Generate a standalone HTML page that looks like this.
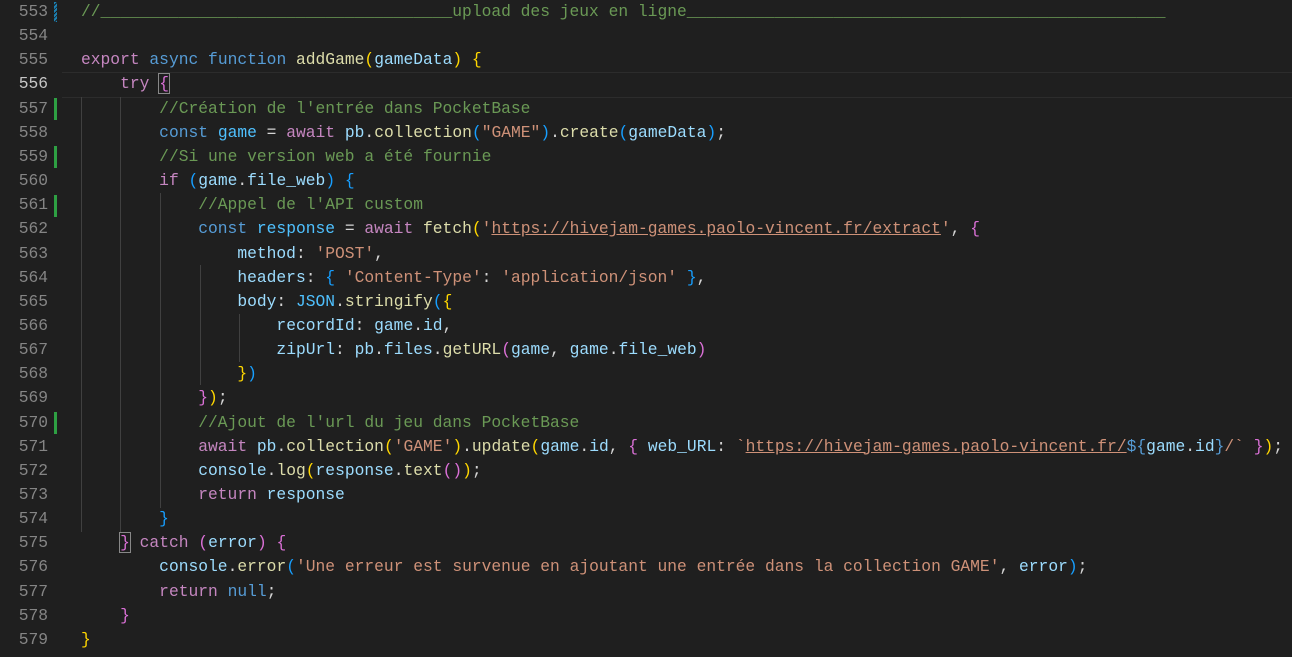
<!DOCTYPE html>
<html><head><meta charset="utf-8"><style>
html,body{margin:0;padding:0;background:#1f1f1f;width:1292px;height:657px;overflow:hidden}
.ed{position:relative;width:1292px;height:657px;font-family:"Liberation Mono",monospace;font-size:16.3px;color:#d4d4d4}
.l{position:absolute;left:0;height:24.15px;line-height:24.15px;white-space:pre;width:1292px}
.n{position:absolute;left:0;width:48px;text-align:right;color:#858585}
.c{position:absolute;left:81px}
.g{position:absolute;width:1px;background:#404040}
.k{color:#c586c0}.s{color:#569cd6}.f{color:#dcdcaa}.v{color:#9cdcfe}.o{color:#4fc1ff}.st{color:#ce9178}.cm{color:#6a9955}
.y{color:#ffd700}.p{color:#da70d6}.b{color:#179fff}.u{text-decoration:underline}
.mk{position:absolute;left:54px;width:3px;background:#2ea043}
</style></head><body><div class="ed">
<div style="position:absolute;left:62px;top:72px;width:1230px;height:24px;border-top:1px solid #2c2c2c;border-bottom:1px solid #2c2c2c"></div>
<div class="g" style="left:81px;top:97px;height:435px"></div>
<div class="g" style="left:120px;top:97px;height:435px"></div>
<div class="g" style="left:160px;top:193px;height:315px"></div>
<div class="g" style="left:200px;top:265px;height:120px"></div>
<div class="g" style="left:239px;top:314px;height:48px"></div>
<div style="position:absolute;left:54px;top:2px;width:3px;height:20px;background:repeating-linear-gradient(135deg,#1b80b3 0 2px,#1f1f1f 2px 3px)"></div>
<div class="mk" style="top:98px;height:22px"></div>
<div class="mk" style="top:146px;height:22px"></div>
<div class="mk" style="top:195px;height:22px"></div>
<div class="mk" style="top:412px;height:22px"></div>

<div class="l" style="top:0px"><span class="n">553</span><span class="c cm">//____________________________________upload des jeux en ligne_________________________________________________</span></div>
<div class="l" style="top:24.15px"><span class="n">554</span></div>
<div class="l" style="top:48.3px"><span class="n">555</span><span class="c"><span class="k">export</span> <span class="s">async</span> <span class="s">function</span> <span class="f">addGame</span><span class="y">(</span><span class="v">gameData</span><span class="y">)</span> <span class="y">{</span></span></div>
<div class="l" style="top:72.45px"><span class="n" style="color:#c6c6c6">556</span><span class="c">    <span class="k">try</span> <span class="p" style="outline:1px solid #888">{</span></span></div>
<div class="l" style="top:96.6px"><span class="n">557</span><span class="c">        <span class="cm">//Création de l'entrée dans PocketBase</span></span></div>
<div class="l" style="top:120.75px"><span class="n">558</span><span class="c">        <span class="s">const</span> <span class="o">game</span> = <span class="k">await</span> <span class="v">pb</span>.<span class="f">collection</span><span class="b">(</span><span class="st">"GAME"</span><span class="b">)</span>.<span class="f">create</span><span class="b">(</span><span class="v">gameData</span><span class="b">)</span>;</span></div>
<div class="l" style="top:144.9px"><span class="n">559</span><span class="c">        <span class="cm">//Si une version web a été fournie</span></span></div>
<div class="l" style="top:169.05px"><span class="n">560</span><span class="c">        <span class="k">if</span> <span class="b">(</span><span class="v">game</span>.<span class="v">file_web</span><span class="b">)</span> <span class="b">{</span></span></div>
<div class="l" style="top:193.2px"><span class="n">561</span><span class="c">            <span class="cm">//Appel de l'API custom</span></span></div>
<div class="l" style="top:217.35px"><span class="n">562</span><span class="c">            <span class="s">const</span> <span class="o">response</span> = <span class="k">await</span> <span class="f">fetch</span><span class="y">(</span><span class="st">'<span class="u">https://hivejam-games.paolo-vincent.fr/extract</span>'</span>, <span class="p">{</span></span></div>
<div class="l" style="top:241.5px"><span class="n">563</span><span class="c">                <span class="v">method</span>: <span class="st">'POST'</span>,</span></div>
<div class="l" style="top:265.65px"><span class="n">564</span><span class="c">                <span class="v">headers</span>: <span class="b">{</span> <span class="st">'Content-Type'</span>: <span class="st">'application/json'</span> <span class="b">}</span>,</span></div>
<div class="l" style="top:289.8px"><span class="n">565</span><span class="c">                <span class="v">body</span>: <span class="o">JSON</span>.<span class="f">stringify</span><span class="b">(</span><span class="y">{</span></span></div>
<div class="l" style="top:313.95px"><span class="n">566</span><span class="c">                    <span class="v">recordId</span>: <span class="v">game</span>.<span class="v">id</span>,</span></div>
<div class="l" style="top:338.1px"><span class="n">567</span><span class="c">                    <span class="v">zipUrl</span>: <span class="v">pb</span>.<span class="v">files</span>.<span class="f">getURL</span><span class="p">(</span><span class="v">game</span>, <span class="v">game</span>.<span class="v">file_web</span><span class="p">)</span></span></div>
<div class="l" style="top:362.25px"><span class="n">568</span><span class="c">                <span class="y">}</span><span class="b">)</span></span></div>
<div class="l" style="top:386.4px"><span class="n">569</span><span class="c">            <span class="p">}</span><span class="y">)</span>;</span></div>
<div class="l" style="top:410.55px"><span class="n">570</span><span class="c">            <span class="cm">//Ajout de l'url du jeu dans PocketBase</span></span></div>
<div class="l" style="top:434.7px"><span class="n">571</span><span class="c">            <span class="k">await</span> <span class="v">pb</span>.<span class="f">collection</span><span class="y">(</span><span class="st">'GAME'</span><span class="y">)</span>.<span class="f">update</span><span class="y">(</span><span class="v">game</span>.<span class="v">id</span>, <span class="p">{</span> <span class="v">web_URL</span>: <span class="st">`<span class="u">https://hivejam-games.paolo-vincent.fr/</span></span><span class="s">${</span><span class="v">game</span>.<span class="v">id</span><span class="s">}</span><span class="st">/`</span> <span class="p">}</span><span class="y">)</span>;</span></div>
<div class="l" style="top:458.85px"><span class="n">572</span><span class="c">            <span class="v">console</span>.<span class="f">log</span><span class="y">(</span><span class="v">response</span>.<span class="f">text</span><span class="p">()</span><span class="y">)</span>;</span></div>
<div class="l" style="top:483px"><span class="n">573</span><span class="c">            <span class="k">return</span> <span class="v">response</span></span></div>
<div class="l" style="top:507.15px"><span class="n">574</span><span class="c">        <span class="b">}</span></span></div>
<div class="l" style="top:531.3px"><span class="n">575</span><span class="c">    <span class="p" style="outline:1px solid #888">}</span> <span class="k">catch</span> <span class="p">(</span><span class="v">error</span><span class="p">)</span> <span class="p">{</span></span></div>
<div class="l" style="top:555.45px"><span class="n">576</span><span class="c">        <span class="v">console</span>.<span class="f">error</span><span class="b">(</span><span class="st">'Une erreur est survenue en ajoutant une entrée dans la collection GAME'</span>, <span class="v">error</span><span class="b">)</span>;</span></div>
<div class="l" style="top:579.6px"><span class="n">577</span><span class="c">        <span class="k">return</span> <span class="s">null</span>;</span></div>
<div class="l" style="top:603.75px"><span class="n">578</span><span class="c">    <span class="p">}</span></span></div>
<div class="l" style="top:627.9px"><span class="n">579</span><span class="c"><span class="y">}</span></span></div>
</div></body></html>
